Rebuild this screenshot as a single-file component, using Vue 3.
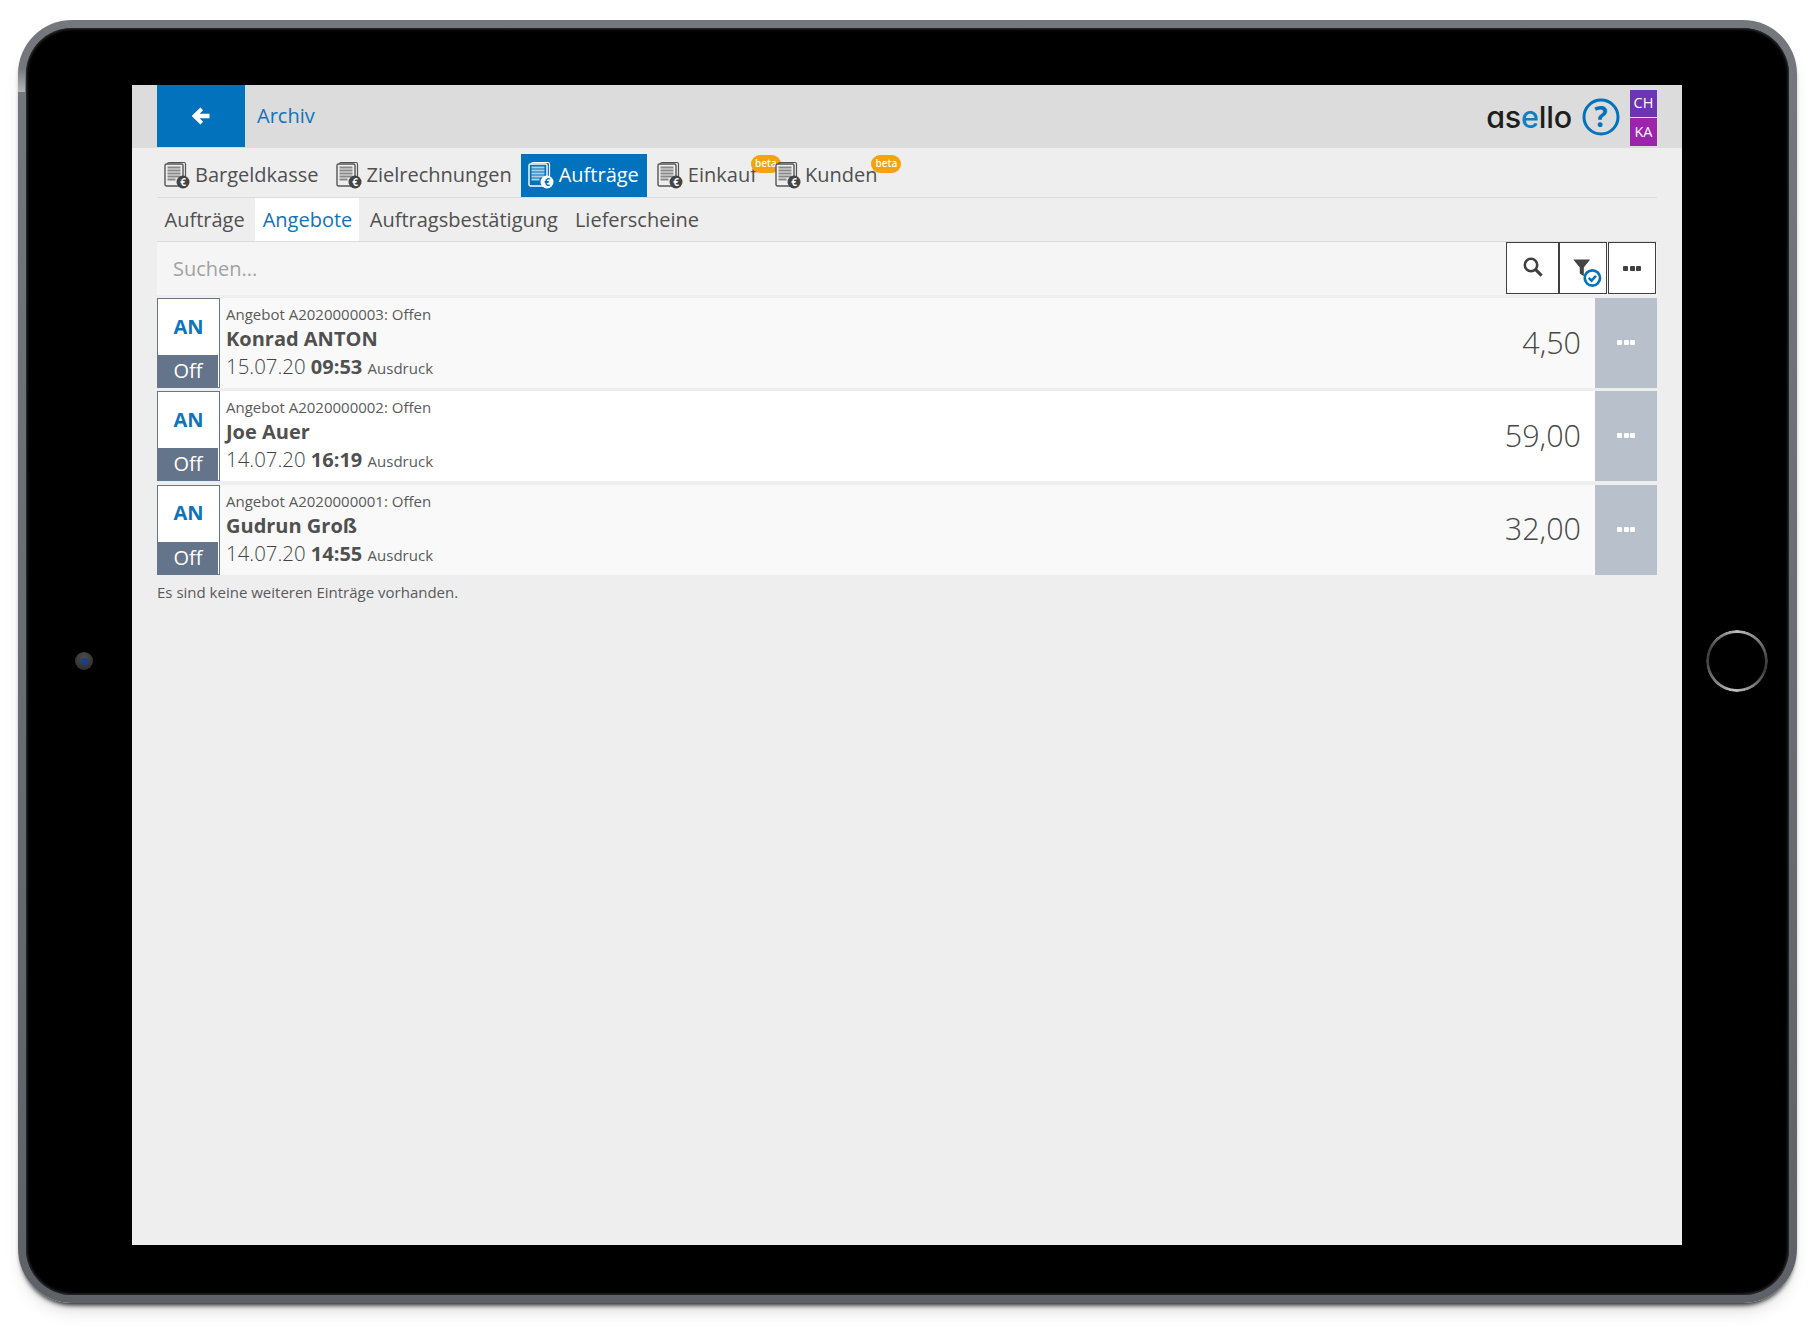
<script setup>
const tabs = [
  { label: 'Bargeldkasse' },
  { label: 'Zielrechnungen' },
  { label: 'Aufträge', active: true },
  { label: 'Einkauf', beta: true },
  { label: 'Kunden', beta: true },
]
const subs = [
  { label: 'Aufträge' },
  { label: 'Angebote', active: true },
  { label: 'Auftragsbestätigung' },
  { label: 'Lieferscheine' },
]
const rows = [
  { meta: 'Angebot A2020000003: Offen', name: 'Konrad ANTON', date: '15.07.20', time: '09:53', amount: '4,50' },
  { meta: 'Angebot A2020000002: Offen', name: 'Joe Auer', date: '14.07.20', time: '16:19', amount: '59,00' },
  { meta: 'Angebot A2020000001: Offen', name: 'Gudrun Groß', date: '14.07.20', time: '14:55', amount: '32,00' },
]
</script>

<template>
  <div class="stage">
    <div class="device">
      <div class="glint"></div>
      <div class="camera"><span></span></div>
      <div class="home"></div>
      <div class="screen">
        <header class="top">
          <button class="back" aria-label="Zurück">
            <svg width="20" height="20" viewBox="0 0 20 20"><path d="M9.4 1.6 1.4 9.2a1.1 1.1 0 0 0 0 1.6l8 7.6 2.7-2.7-3.5-3.4h9.9V7.7H8.6l3.5-3.4z" fill="#fff"/></svg>
          </button>
          <span class="title">Archiv</span>
          <div class="brand">
            <span class="logo">as<b>e</b>llo</span>
            <svg class="help" width="38" height="38" viewBox="0 0 38 38">
              <circle cx="19" cy="19" r="17" fill="none" stroke="#0272bc" stroke-width="3"/>
              <text x="19" y="28.5" text-anchor="middle" class="help-q">?</text>
            </svg>
            <div class="badges"><span class="ch">CH</span><span class="ka">KA</span></div>
          </div>
        </header>

        <main class="content">
          <nav class="tabs">
            <a v-for="t in tabs" :key="t.label" class="tab" :class="{ active: t.active, hasbeta: t.beta }">
              <svg class="doc" width="26" height="28" viewBox="0 0 26 28">
                <rect x="3.5" y="1.5" width="18" height="21" rx="1.5" fill="none" :stroke="t.active ? '#fff' : '#555'" stroke-width="1.2"/>
                <rect x="1" y="3" width="18" height="22" rx="1.5" :fill="t.active ? '#0272bc' : '#eee'" :stroke="t.active ? '#fff' : '#555'" stroke-width="1.4"/>
                <path d="M3.5 6.5h13M3.5 9.5h13M3.5 12.5h13M3.5 15.5h13M3.5 18.5h8" :stroke="t.active ? '#a9cfe9' : '#888'" stroke-width="2"/>
                <circle cx="19" cy="21" r="6.5" :fill="t.active ? '#fff' : '#444'"/>
                <text x="19" y="24.6" text-anchor="middle" class="euro" :fill="t.active ? '#0272bc' : '#fff'">€</text>
              </svg>
              <span>{{ t.label }}</span>
              <em v-if="t.beta" class="beta">beta</em>
            </a>
          </nav>

          <nav class="subs">
            <a v-for="s in subs" :key="s.label" class="sub" :class="{ active: s.active }">{{ s.label }}</a>
          </nav>

          <div class="search">
            <span class="placeholder">Suchen...</span>
            <div class="tools">
              <button class="tool t1" aria-label="Suchen">
                <svg width="22" height="22" viewBox="0 0 22 22"><circle cx="9" cy="9" r="6.2" fill="none" stroke="#3f3f3f" stroke-width="2.6"/><path d="m13.6 13.6 6 6" stroke="#3f3f3f" stroke-width="3"/></svg>
              </button>
              <button class="tool t2" aria-label="Filter">
                <svg width="36" height="36" viewBox="0 0 32 32">
                  <path d="M2 3h15l-5.6 7.2V18l-3.6-2.5v-5.3z" fill="#444"/>
                  <circle cx="19" cy="19.5" r="6.8" fill="#fff" stroke="#0272bc" stroke-width="2.4"/>
                  <path d="m15.8 19.5 2.4 2.4 4-4.2" fill="none" stroke="#0272bc" stroke-width="2.2"/>
                </svg>
              </button>
              <button class="tool t3" aria-label="Mehr"><i class="dots dark"><b></b><b></b><b></b></i></button>
            </div>
          </div>

          <div class="list">
            <article v-for="(r, i) in rows" :key="r.meta" class="row" :class="{ odd: i % 2 === 0 }">
              <div class="status">
                <strong>AN</strong>
                <span>Off</span>
              </div>
              <div class="info">
                <div class="meta">{{ r.meta }}</div>
                <div class="name">{{ r.name }}</div>
                <div class="when">{{ r.date }} <b>{{ r.time }}</b> <small>Ausdruck</small></div>
              </div>
              <div class="amount">{{ r.amount }}</div>
              <button class="more" aria-label="Aktionen"><i class="dots"><b></b><b></b><b></b></i></button>
            </article>
          </div>

          <p class="foot">Es sind keine weiteren Einträge vorhanden.</p>
        </main>
      </div>
    </div>
  </div>
</template>

<style>
html, body { margin: 0; background: #fff; }
</style>

<style scoped>
.stage {
  width: 1815px;
  height: 1331px;
  box-sizing: border-box;
  padding: 20px 18px 0;
  overflow: hidden;
  font-family: "Open Sans", "Liberation Sans", sans-serif;
  color: #505050;
  background: #fff;
}
.device {
  position: relative;
  box-sizing: border-box;
  width: 1779px;
  height: 1283px;
  padding: 57px 106px 0;
  background: linear-gradient(#000, #000) padding-box, linear-gradient(180deg, #74787c, #5e6268) border-box;
  border-radius: 54px;
  border: 8px solid transparent;
  box-shadow: inset 0 0 3px 1px #34373b, 0 5px 5px -3px #1c1c1c, 0 12px 18px -6px rgba(0, 0, 0, .16);
}
.glint {
  position: absolute;
  left: -8px;
  top: 40px;
  width: 7px;
  height: 24px;
  background: linear-gradient(180deg, rgba(190, 192, 194, 0), #b3b5b7);
}
.camera {
  position: absolute;
  left: 49px;
  top: 624px;
  width: 18px;
  height: 18px;
  border-radius: 50%;
  background: radial-gradient(circle at 50% 30%, #4a4a4c, #28282a);
  display: flex;
  align-items: center;
  justify-content: center;
}
.camera span { width: 7px; height: 7px; border-radius: 50%; background: #1b3d8c; }
.home {
  position: absolute;
  left: 1680px;
  top: 602px;
  width: 62px;
  height: 62px;
  border-radius: 50%;
  background: conic-gradient(#bdbdbd 0deg, #444 85deg, #3a3a3a 110deg, #c4c4c4 185deg, #444 265deg, #3c3c3c 290deg, #bdbdbd 360deg);
  -webkit-mask: radial-gradient(circle, transparent 27.5px, #000 28.5px, #000 30.5px, transparent 31.5px);
  mask: radial-gradient(circle, transparent 27.5px, #000 28.5px, #000 30.5px, transparent 31.5px);
}
.screen {
  width: 1550px;
  height: 1160px;
  background: #eee;
  padding: 0 25px;
  box-sizing: border-box;
}
.top {
  display: flex;
  align-items: center;
  height: 63px;
  margin: 0 -25px;
  padding: 0 25px;
  background: #dcdcdc;
}
.back {
  width: 88px;
  height: 62px;
  margin-bottom: 1px;
  border: 0;
  padding: 0;
  background: #0272bc;
  display: flex;
  align-items: center;
  justify-content: center;
}
.title { margin-left: 12px; margin-bottom: 2px; font-size: 20px; color: #0f74b9; }
.brand { margin-left: auto; display: flex; align-items: center; }
.logo { font-family: Inter, sans-serif; font-feature-settings: "cv11" 1; font-size: 30.5px; font-weight: 500; color: #1e1e1e; letter-spacing: -.2px; }
.logo b { font-weight: 500; color: #0d7fc4; }
.help { margin-left: 10px; margin-right: 1px; overflow: visible; }
.help-q { font: 700 28px "Open Sans", sans-serif; fill: #0272bc; }
.badges { margin-left: 9px; display: flex; flex-direction: column; gap: 1px; align-self: flex-start; padding-top: 3px; }
.badges span { display: flex; align-items: center; justify-content: center; width: 27px; height: 27px; box-sizing: border-box; padding-bottom: 3px; color: #fff; font-size: 14.5px; }
.ch { background: #6c35b4; }
.ka { background: #9d23ad; height: 28px !important; padding-bottom: 1px !important; }

.tabs {
  display: flex;
  height: 43px;
  margin-top: 6px;
  border-bottom: 1px solid #dcdcdc;
}
.tab {
  display: flex;
  align-items: center;
  gap: 5px;
  height: 41px;
  padding: 0 7px 2px;
  font-size: 20px;
  position: relative;
}
.tab + .tab { margin-left: 3px; }
.tab.active { background: #0272bc; color: #fff; margin-left: 2px; padding-right: 8px; }
.tab.hasbeta { padding-right: 8px; }
.tab:last-child { gap: 4px; }
.doc { flex: none; }
.euro { font: 700 10px "Open Sans", sans-serif; }
.beta {
  position: absolute;
  top: 1px;
  right: -16px;
  width: 30px;
  height: 18px;
  border-radius: 9px;
  background: #f2a30f;
  color: #fff;
  font: 600 10px/17px "Open Sans", sans-serif;
  text-align: center;
}
.subs {
  display: flex;
  height: 43px;
  border-bottom: 1px solid #dcdcdc;
}
.sub {
  display: flex;
  align-items: center;
  padding: 0 7px;
  margin-right: 3px;
  font-size: 20px;
}
.sub:first-child { margin-right: 3px; padding-left: 7.5px; }
.sub.active { background: #fff; color: #0f74b9; margin-right: 3.5px; padding-left: 8px; }
.search {
  display: flex;
  align-items: flex-start;
  justify-content: space-between;
  height: 53px;
  background: #f5f5f5;
}
.placeholder { margin: 13px 0 0 16px; font-size: 20px; color: #a2a2a2; line-height: 27px; }
.tools { display: flex; margin-right: 1px; }
.tool {
  height: 52px;
  box-sizing: border-box;
  border: 1.5px solid #3f3f3f;
  background: #fff;
  padding: 0;
  display: flex;
  align-items: center;
  justify-content: center;
}
.t1 { width: 53px; padding-bottom: 3px; }
.t2 { width: 48px; padding: 12px 0 0 11px; justify-content: flex-start; }
.t2 svg { flex: none; }
.t3 { width: 48px; margin-left: 1px; }
.dots { display: flex; gap: 1.5px; }
.dots b { width: 5px; height: 5px; border-radius: 1px; background: #fff; }
.dots.dark b { background: #3f3f3f; }

.list { display: flex; flex-direction: column; gap: 3.4px; margin-top: 3px; }
.row {
  display: flex;
  align-items: stretch;
  height: 90px;
  background: #fff;
}
.row.odd { background: #f9f9f9; }
.status {
  width: 63px;
  box-sizing: border-box;
  border: 1px solid #66778a;
  border-right-width: 1.5px;
  background: #fff;
  display: flex;
  flex-direction: column;
  flex: none;
}
.status strong { flex: 1; display: flex; align-items: center; justify-content: center; font-size: 20px; font-weight: 700; color: #0f74b9; padding-bottom: 2px; }
.status span {
  height: 32px;
  margin-right: 1px;
  background: #64748a;
  color: #fff;
  font-size: 20px;
  line-height: 31px;
  text-align: center;
  font-weight: 400;
}
.info { margin-left: 6px; padding-top: 6px; }
.meta { font-size: 15px; line-height: 21px; color: #5a5a5a; }
.name { font-size: 20px; font-weight: 700; line-height: 28px; color: #505050; }
.when { font-size: 20.4px; line-height: 27px; color: #444; font-weight: 300; }
.when b { font-size: 20px; font-weight: 700; color: #505050; }
.when small { font-size: 15px; font-weight: 400; color: #5a5a5a; }
.amount { margin-left: auto; align-self: center; padding-right: 14px; font-size: 30.5px; font-weight: 300; color: #484848; padding-bottom: 3px; }
.more {
  width: 62px;
  border: 0;
  padding: 0 0 1px;
  background: #b8c1cb;
  display: flex;
  align-items: center;
  justify-content: center;
}
.foot { margin: 7px 0 0; font-size: 15px; line-height: 20px; color: #5a5a5a; }
</style>
